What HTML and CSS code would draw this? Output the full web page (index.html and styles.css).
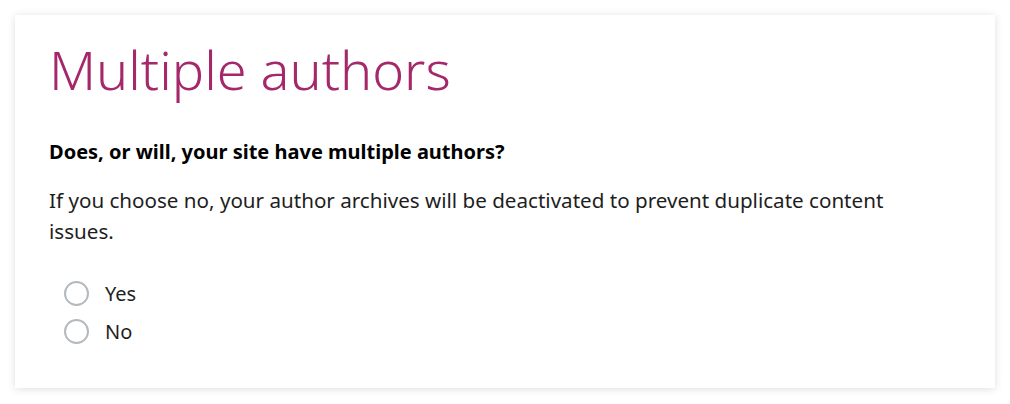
FILE: index.html
```html
<!DOCTYPE html>
<html lang="en">
<head>
    <meta charset="UTF-8">
    <meta name="viewport" content="width=device-width, initial-scale=1.0">
    <title>Multiple authors</title>
    <link rel="stylesheet" href="styles.css">
</head>
<body>
    <!-- Passo: vários autores -->
    <div class="card">
        <h1>Multiple authors</h1>
        <h2 class="question">Does, or will, your site have multiple authors?</h2>
        <p class="description">If you choose no, your author archives will be deactivated to prevent duplicate content issues.</p>
        <div class="options">
            <label class="option">
                <input type="radio" name="multipleAuthors" value="yes">
                <span class="radio"></span>
                Yes
            </label>
            <label class="option">
                <input type="radio" name="multipleAuthors" value="no">
                <span class="radio"></span>
                No
            </label>
        </div>
    </div>
</body>
</html>
```

FILE: styles.css
```css
/* Estilo Global */
body {
    font-family: 'Noto Sans', 'Open Sans', sans-serif;
    margin: 0;
    padding: 15px;
    background: #fff;
    color: #1e1e1e;
}

.card {
    background: #fff;
    padding: 20px 34px 38px;
    box-shadow: 0 1px 8px rgba(0, 0, 0, 0.13);
}

.card h1 {
    margin: 0;
    font-size: 54px;
    font-weight: 300;
    line-height: 68px;
    color: #a4286a;
}

.question {
    margin: 36px 0 0;
    font-size: 20px;
    font-weight: 700;
    line-height: 26px;
    color: #000;
}

.description {
    margin: 20px 0 0;
    max-width: 860px;
    font-size: 20.6px;
    line-height: 31px;
}

.options {
    margin-top: 27px;
    padding-left: 15px;
}

.option {
    display: flex;
    align-items: center;
    gap: 16px;
    height: 38px;
    font-size: 20px;
    cursor: pointer;
}

.option input {
    display: none;
}

.radio {
    width: 21px;
    height: 21px;
    border: 2px solid #b4b9be;
    border-radius: 50%;
    background: #fff;
}

.option input:checked + .radio {
    border-color: #a4286a;
    box-shadow: inset 0 0 0 5px #fff;
    background: #a4286a;
}
```
